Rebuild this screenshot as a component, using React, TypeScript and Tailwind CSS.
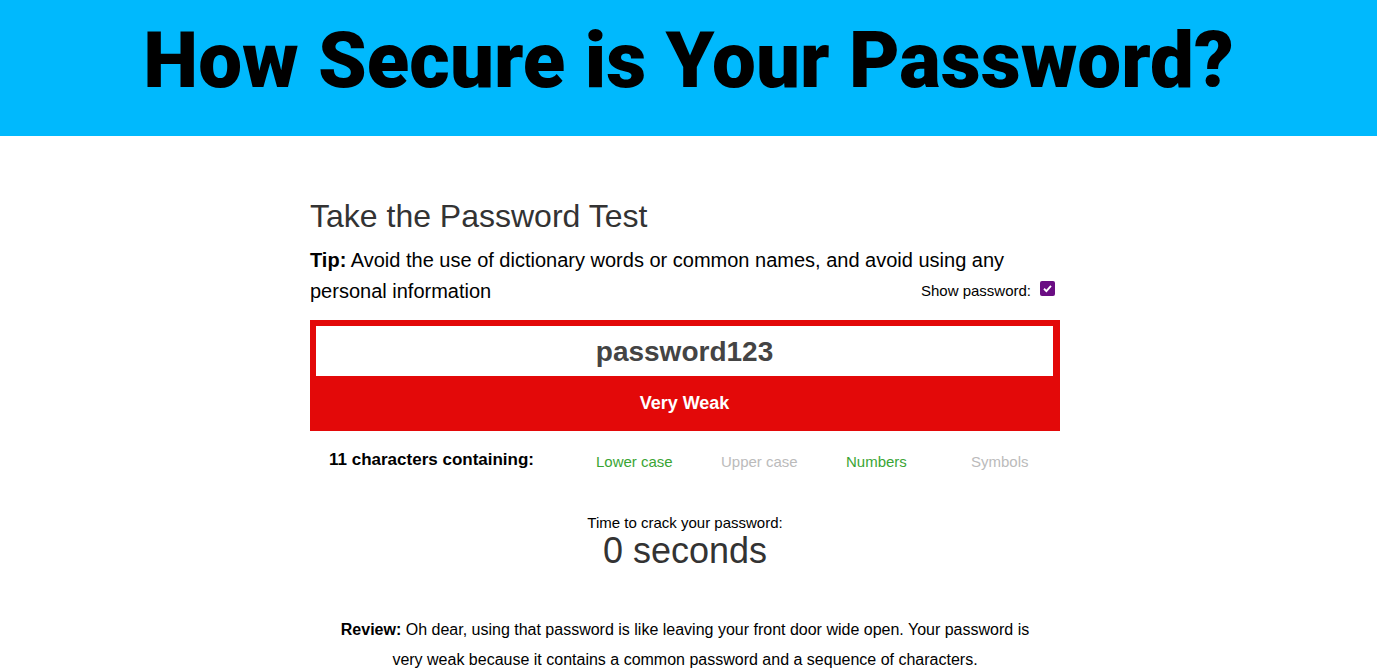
export default function App() {
  const items = [
    { label: 'Lower case', on: true },
    { label: 'Upper case', on: false },
    { label: 'Numbers', on: true },
    { label: 'Symbols', on: false },
  ];

  return (
    <div className="min-h-screen bg-white font-['Liberation_Sans',Arial,sans-serif]">
      <header className="h-[136px] bg-[#00b9fd] flex items-center justify-center">
        <h1 className="font-['Roboto',sans-serif] font-black text-[78px] leading-none tracking-normal text-black pb-[14px]">
          How Secure is Your Password?
        </h1>
      </header>

      <div className="flex justify-center pr-[7px]">
        <main className="w-[750px] pt-[60px]">
          <h2 className="text-[32px] leading-[40px] text-[#333]">Take the Password Test</h2>
          <p className="mt-[9px] text-[20px] leading-[31px] text-black">
            <span className="font-bold">Tip:</span> Avoid the use of dictionary words or common names, and avoid using any
            <br />
            personal information
          </p>
          <div className="-mt-[27px] flex items-center justify-end gap-[9px] pr-[5px]">
            <span className="text-[15px] text-black">Show password:</span>
            <span className="w-[15px] h-[15px] -mt-[6px] rounded-[2px] bg-[#6a0d83] flex items-center justify-center">
              <svg viewBox="0 0 12 12" className="w-[11px] h-[11px]">
                <path d="M2.2 6.3 L4.8 8.8 L9.8 3.2" fill="none" stroke="white" strokeWidth="2" />
              </svg>
            </span>
          </div>

          <div className="mt-[17px] bg-[#e30909] pt-[6px] px-[6px] pr-[7px]">
            <div className="h-[50px] bg-white flex items-center justify-center">
              <span className="text-[28px] font-bold text-[#444] mt-[3px]">password123</span>
            </div>
            <div className="h-[55px] flex items-center justify-center text-white font-bold text-[18px]">
              Very Weak
            </div>
          </div>

          <div className="flex items-center h-[60px] pt-[3px] text-[15px]">
            <div className="w-[286px] flex-none pl-[19px] font-bold text-[17px] text-black -mt-[4px]">
              11 characters containing:
            </div>
            {items.map((it) => (
              <div
                key={it.label}
                className={'w-[125px] flex-none ' + (it.on ? 'text-[#3aa535]' : 'text-[#bbbbbb]')}
              >
                {it.label}
              </div>
            ))}
          </div>

          <div className="mt-[23px] text-center">
            <div className="text-[15px] leading-[18px] text-black">Time to crack your password:</div>
            <div className="text-[36px] leading-[38px] text-[#333]">0 seconds</div>
          </div>

          <p className="mt-[45px] text-center text-[16px] leading-[30px] text-black px-[22px]">
            <span className="font-bold">Review:</span> Oh dear, using that password is like leaving your front door wide open. Your password is very weak because it contains a common password and a sequence of characters.
          </p>
        </main>
      </div>
    </div>
  );
}
